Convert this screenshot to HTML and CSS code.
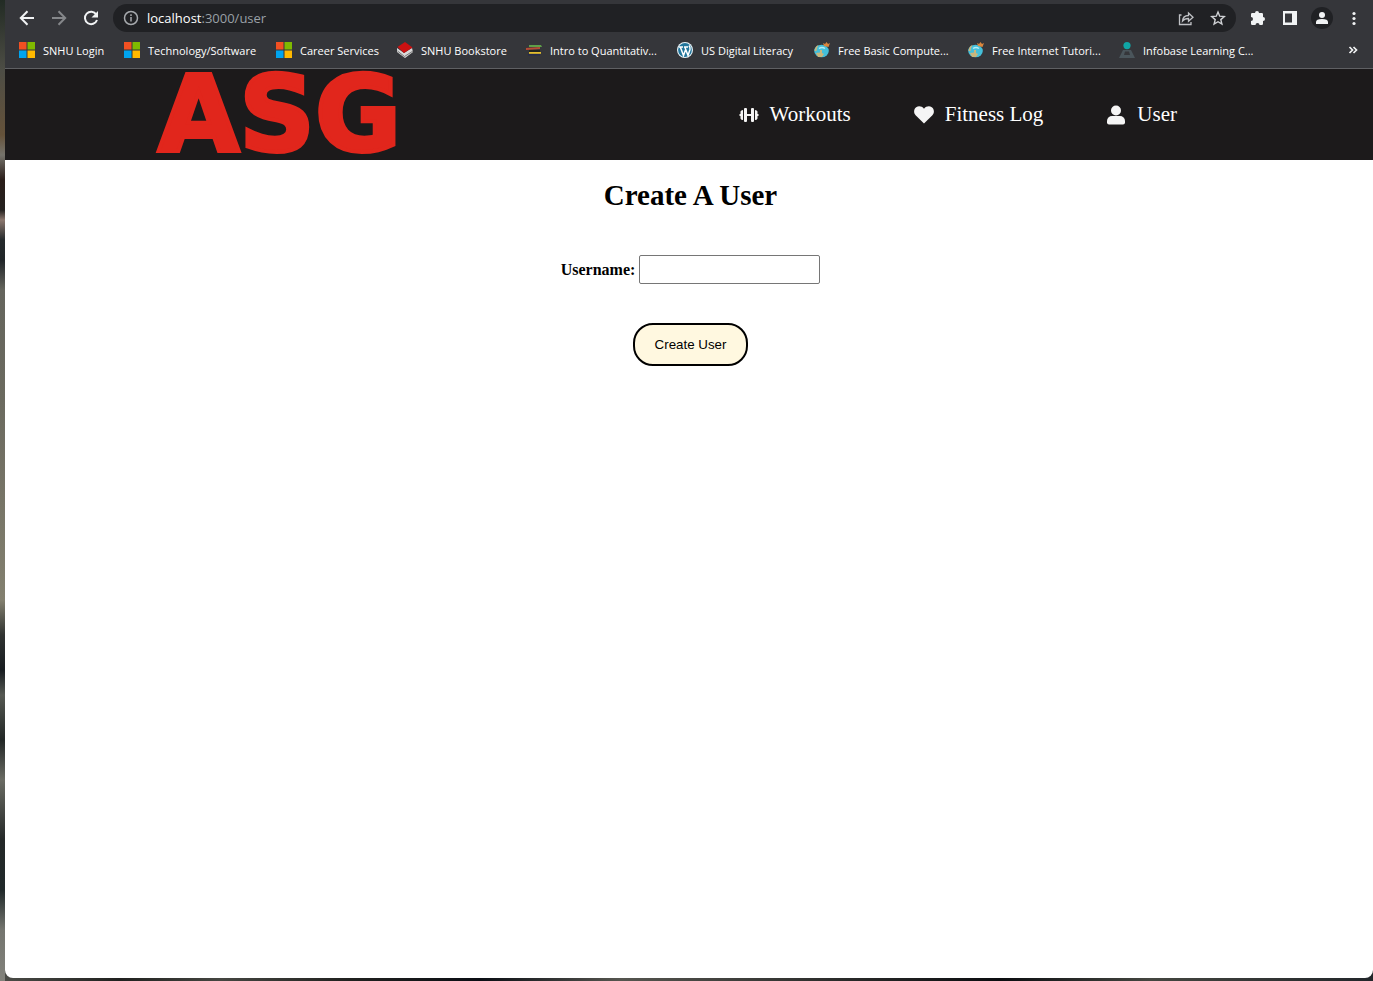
FILE: index.html
```html
<!DOCTYPE html>
<html lang="en">
<head>
<meta charset="utf-8">
<title>Create A User</title>
<link rel="stylesheet" href="styles.css">
</head>
<body>
<svg width="0" height="0" class="defs" aria-hidden="true">
  <symbol id="ms" viewBox="0 0 16 16"><path fill="#f25022" d="M0 0h7.5v7.5H0z"/><path fill="#7fba00" d="M8.500 0H16v7.500H8.500z"/><path fill="#00a4ef" d="M0 8.500h7.500V16H0z"/><path fill="#ffb900" d="M8.500 8.500H16V16H8.500z"/></symbol>
  <symbol id="globe" viewBox="0 0 16 16"><ellipse cx="7.500" cy="9" rx="7.300" ry="6.300" fill="#45bfd9"/><path d="M0.500 9q.5-5 4-6L3 6 2.500 9zM2 11l4-.5V8l2 0v3l2 1-2 3H4z" fill="#c9b67c"/><path d="M5 6.500q3-2 6 0" stroke="#b5edf5" stroke-width="1.500" fill="none"/><path d="M9 1l2 1L12.500 0 14 2l2-1-1.500 4-4.500-1z" fill="#d9853c"/></symbol>
</svg>
<div class="window">
  <div class="toolbar">
    <button class="tool" aria-label="Back"><svg width="16" height="16" viewBox="0 0 16 16" fill="none" stroke="#f1f3f4" stroke-width="2"><path d="M15 8H2M8.500 1.300L1.800 8l6.700 6.700"/></svg></button>
    <button class="tool" aria-label="Forward"><svg width="16" height="16" viewBox="0 0 16 16" fill="none" stroke="#85878a" stroke-width="2"><path d="M1 8h13M7.500 1.300L14.200 8l-6.700 6.700"/></svg></button>
    <button class="tool" aria-label="Reload"><svg width="16" height="16" viewBox="0 0 16 16"><path d="M13.300 4.500A6.200 6.200 0 1 0 14 10" fill="none" stroke="#f1f3f4" stroke-width="2"/><path d="M15 1v6.500H8.500z" fill="#f1f3f4"/></svg></button>
    <div class="address">
      <svg width="16" height="16" viewBox="0 0 16 16" fill="none" stroke="#a6a9ad" stroke-width="1.500"><circle cx="8" cy="8" r="6.500"/><path d="M8 7v4.500M8 4.300v1.600"/></svg>
      <div class="url"><span class="host">localhost</span>:3000/user</div>
      <button class="tool" aria-label="Share"><svg width="16" height="16" viewBox="0 0 16 16" fill="none" stroke="#bfc1c5" stroke-width="1.300"><path d="M3.500 5H1.500v9.500h11.500V12"/><path d="M4.500 11q.5-5.500 6-5.500V3l4.500 4.200-4.500 4V8.500q-4 0-6 2.500z"/></svg></button>
      <button class="tool" aria-label="Bookmark this page"><svg width="16" height="16" viewBox="0 0 16 16" fill="none" stroke="#d0d2d5" stroke-width="1.400"><path d="M8 2l1.700 4.200 4.600.4-3.500 3 1.100 4.500L8 11.700l-3.900 2.400 1.100-4.500-3.500-3 4.600-.4z"/></svg></button>
    </div>
    <button class="tool" aria-label="Extensions"><svg width="16" height="16" viewBox="0 0 16 16" fill="#f1f3f4"><path d="M1 4.200Q1 3 2.200 3H5a2 2 0 0 1 4 0h2.800Q13 3 13 4.200V7a2 2 0 0 1 0 4v2.800Q13 15 11.800 15H9.500a2 2 0 0 0-4 0H2.200Q1 15 1 13.800V11a2 2 0 0 0 0-4z"/></svg></button>
    <button class="tool" aria-label="Side panel"><svg width="16" height="16" viewBox="0 0 16 16"><path fill="#f1f3f4" fill-rule="evenodd" d="M1 1h14v14H1zM3 3.500v9h7v-9z"/></svg></button>
    <button class="tool" aria-label="Profile"><svg width="22" height="22" viewBox="0 0 22 22"><circle cx="11" cy="11" r="11" fill="#202124"/><circle cx="11" cy="8" r="3" fill="#f1f3f4"/><path fill="#f1f3f4" d="M5 17v-2q0-3 6-3t6 3v2z"/></svg></button>
    <button class="tool" aria-label="Menu"><svg width="16" height="16" viewBox="0 0 16 16" fill="#f1f3f4"><circle cx="8" cy="3.500" r="1.600"/><circle cx="8" cy="8.500" r="1.600"/><circle cx="8" cy="13.500" r="1.600"/></svg></button>
  </div>
  <nav class="bookmarks" aria-label="Bookmarks">
    <a href="#"><svg><use href="#ms"/></svg>SNHU Login</a>
    <a href="#"><svg><use href="#ms"/></svg>Technology/Software</a>
    <a href="#"><svg><use href="#ms"/></svg>Career Services</a>
    <a href="#"><svg viewBox="0 0 16 16"><path fill="#d8d8d8" d="M0 6l7 5 8-5 1 4-8 6-8-6z"/><path fill="none" stroke="#777" d="M0.500 9l7 5.500L16 9"/><path fill="#cc1111" d="M0.500 5L8 0l7.500 5.500L7 11z"/></svg>SNHU Bookstore</a>
    <a href="#"><svg viewBox="0 0 16 16"><path fill="#5f9f48" d="M3 3h12l1 2H3z"/><path fill="#b64b35" d="M0 6l14-1v2L0 8z"/><path fill="#20231f" d="M3 8h11v2H3z"/><path fill="#e3bd2e" d="M3 10h12v1.800H3z"/><path fill="#22284f" d="M2 12.200h12v1.300H2z"/></svg>Intro to Quantitativ...</a>
    <a href="#"><svg viewBox="0 0 16 16"><circle cx="8" cy="8" r="8" fill="#e8f3f8"/><circle cx="8" cy="8" r="6.900" fill="#21759b"/><path d="M2 5h4M7 5h4M3.500 5.500l3 8 2-5.500M8 5.500l3 8 2-6q.5-2-1-4" fill="none" stroke="#fff" stroke-width="1.500"/></svg>US Digital Literacy</a>
    <a href="#"><svg><use href="#globe"/></svg>Free Basic Compute...</a>
    <a href="#"><svg><use href="#globe"/></svg>Free Internet Tutori...</a>
    <a href="#"><svg viewBox="0 0 16 16"><path fill="#4a555b" fill-rule="evenodd" d="M4 8h8l4 8H0zM6 9.500L5 13h6l-1-3.500z"/><circle cx="8" cy="3.600" r="3.600" fill="#10a5a5"/></svg>Infobase Learning C...</a>
    <button class="tool more" aria-label="More bookmarks"><svg viewBox="0 0 16 16" fill="none" stroke="#f1f3f4" stroke-width="1.700"><path d="M4.500 5l3 3-3 3M8.500 5l3 3-3 3"/></svg></button>
  </nav>
  <header class="site-header">
    <a class="logo" href="#">ASG</a>
    <nav class="site-nav" aria-label="Main">
      <a href="#"><svg width="20" height="20" viewBox="0 0 20 20" fill="#f5f5f5"><rect x="5" y="3" width="3" height="14" rx="1"/><rect x="12" y="3" width="3" height="14" rx="1"/><path d="M8 9h4v2H8zM1.500 6.500Q2 5 4 5v10q-2 0-2.500-1.500V11H.500V9h1zM18.500 6.500Q18 5 16 5v10q2 0 2.500-1.500V11h1V9h-1z"/></svg>Workouts</a>
      <a href="#"><svg width="20" height="20" viewBox="0 0 20 20" fill="#f5f5f5"><path d="M10 18.500L1.600 10.200C-.7 7.800-.2 4 2.200 2.300 4.700.6 7.800 1.300 10 3.700c2.200-2.400 5.300-3.100 7.800-1.400 2.400 1.700 2.900 5.500.6 7.900z"/></svg>Fitness Log</a>
      <a href="#"><svg width="20" height="20" viewBox="0 0 20 20" fill="#f5f5f5"><circle cx="10" cy="5.500" r="5"/><path d="M1 17.500v-1.500a5 5 0 0 1 5-5h8a5 5 0 0 1 5 5v1.500a2 2 0 0 1-2 2H3a2 2 0 0 1-2-2z"/></svg>User</a>
    </nav>
  </header>
  <main class="content">
    <h1>Create A User</h1>
    <form class="user-form">
      <div class="field"><label for="username">Username:</label><input id="username" type="text"></div>
      <button class="submit" type="button">Create User</button>
    </form>
  </main>
</div>
</body>
</html>
```
FILE: styles.css
```css
* { box-sizing: border-box; }
body {
  margin: 0;
  min-height: 100vh;
  padding: 0 0 3px 5px;
  display: flex;
  background: linear-gradient(90deg, transparent 5px, #4a4b46 5px, #20211f 120px, #454641 220px, #20211f 350px, #0b0e14 480px, #55554f 620px, #282928 850px, #0b0d10 1000px, #444640 1150px, #22262a),
    linear-gradient(#222b24, #4d4d45 70px, #65523a 135px, #75736b 155px, #2a1d19 180px, #24211f 210px, #8b776e 220px, #252a2c 240px, #202528 260px, #65655d 290px, #6b6a5f 400px, #83806f 600px, #303331 635px, #171c20 670px, #555852 695px, #222726 740px, #6a6b63 780px, #242828 840px, #20292a 890px, #74756f 930px, #82827b);
}
.defs { position: absolute; }
.window {
  flex: 1;
  min-width: 0;
  display: flex;
  flex-direction: column;
  background: #fff;
  border-radius: 0 0 8px 8px;
}
.tool {
  display: flex;
  align-items: center;
  justify-content: center;
  width: 32px;
  height: 28px;
  padding: 0;
  border: 0;
  background: none;
}
.toolbar {
  display: flex;
  align-items: center;
  height: 36px;
  padding: 0 3px 0 6px;
  background: #35363a;
}
.address {
  flex: 1;
  display: flex;
  align-items: center;
  height: 28px;
  margin: 0 6px;
  padding: 0 2px 0 10px;
  border-radius: 14px;
  background: #202124;
}
.url {
  flex: 1;
  margin-left: 8px;
  font: 13px "Open Sans", sans-serif;
  color: #9aa0a6;
}
.host { color: #fff; }
.bookmarks {
  display: grid;
  grid-template-columns: 105px 152px 121px 129px 151px 137px 154px 151px 1fr 32px;
  align-items: center;
  height: 33px;
  padding: 0 4px 6px 14px;
  border-bottom: 1px solid #5f6063;
  background: #35363a;
}
.bookmarks a {
  display: flex;
  align-items: center;
  gap: 8px;
  color: #fff;
  font: 11px "Open Sans", sans-serif;
  white-space: nowrap;
  text-decoration: none;
}
.bookmarks svg { width: 16px; height: 16px; flex: none; }
.site-header {
  display: flex;
  align-items: center;
  justify-content: space-between;
  height: 91px;
  padding: 0 196px 0 153px;
  background: #1c1a1b;
}
.logo {
  font: bold 105px/88px "DejaVu Sans", sans-serif;
  color: #e1261c;
  -webkit-text-stroke: 4px #e1261c;
  text-decoration: none;
}
.site-nav { display: flex; gap: 63px; }
.site-nav a {
  display: flex;
  align-items: center;
  gap: 11px;
  color: #fff;
  font: 21px "Liberation Serif", serif;
  text-decoration: none;
}
.content {
  flex: 1;
  display: flex;
  flex-direction: column;
  align-items: center;
  padding: 19px 0 0 3px;
}
h1 {
  margin: 0 0 44px;
  font: bold 29px/32px "Liberation Serif", serif;
}
.user-form {
  display: flex;
  flex-direction: column;
  align-items: center;
  gap: 39px;
}
.field { display: flex; align-items: center; gap: 4px; }
.field label { font: bold 16px "Liberation Serif", serif; }
.field input {
  width: 181px;
  height: 29px;
  border: 1px solid #767676;
  border-radius: 2px;
}
.submit {
  height: 43px;
  padding: 0 20px;
  border: 2px solid #000;
  border-radius: 20px;
  background: #fff8e0;
  color: #000;
  font-family: "Liberation Sans", sans-serif;
}
```
